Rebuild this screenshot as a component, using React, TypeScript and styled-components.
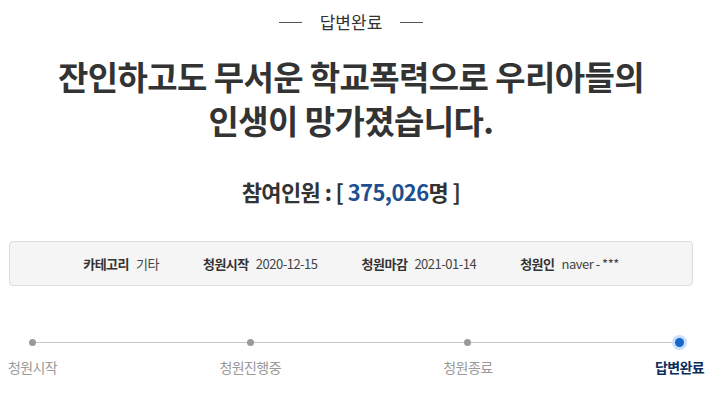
import React from "react";
import styled, { createGlobalStyle } from "styled-components";

const GlobalStyle = createGlobalStyle`
    body {
        margin: 0;
        background: #fff;
        font-family: "Noto Sans CJK KR", "Noto Sans", sans-serif;
        color: #333;
    }
`;

const Page = styled.div`
    width: 712px;
    padding: 11px 18px 0 8px;
    box-sizing: border-box;
`;

const Status = styled.div`
    display: flex;
    justify-content: center;
    align-items: center;
    gap: 18px;
    font-size: 17px;
    line-height: 22px;
    color: #333;

    &::before,
    &::after {
        content: "";
        width: 23px;
        height: 1px;
        background: #555;
    }
`;

const Title = styled.h1`
    margin: 21px 0 0;
    text-align: center;
    font-size: 33px;
    line-height: 44px;
    font-weight: 700;
    letter-spacing: -0.6px;
    color: #333;
`;

const Count = styled.div`
    margin-top: 34px;
    text-align: center;
    font-size: 22px;
    line-height: 30px;
    font-weight: 700;
    letter-spacing: -0.6px;
    color: #333;
`;

const CountNumber = styled.span`
    color: #1d4f91;
`;

const InfoBox = styled.div`
    margin: 35px 1px 0;
    height: 45px;
    box-sizing: border-box;
    border: 1px solid #dcdcdc;
    border-radius: 4px;
    background: #f5f5f5;
    display: flex;
    justify-content: center;
    align-items: center;
    gap: 44px;
    font-size: 13px;
`;

const InfoItem = styled.div`
    display: flex;
    align-items: baseline;
    gap: 7px;
`;

const InfoLabel = styled.span`
    font-weight: 700;
    color: #333;
    letter-spacing: -0.5px;
`;

const InfoValue = styled.span`
    color: #444;
    letter-spacing: -0.5px;
`;

const Steps = styled.div`
    position: relative;
    margin: 53px -10px 0 0;
    display: flex;
    justify-content: space-between;

    &::before {
        content: "";
        position: absolute;
        top: 3px;
        left: 23px;
        right: 32px;
        height: 1px;
        background: #c6c6c6;
    }
`;

const Step = styled.div`
    position: relative;
    display: flex;
    flex-direction: column;
    align-items: center;
    gap: 12px;
`;

const Dot = styled.span<{ $active?: boolean }>`
    width: ${p => (p.$active ? 9 : 7)}px;
    height: ${p => (p.$active ? 9 : 7)}px;
    margin-top: ${p => (p.$active ? -1 : 0)}px;
    margin-bottom: ${p => (p.$active ? -1 : 0)}px;
    border-radius: 50%;
    background: ${p => (p.$active ? "#1a66c9" : "#9a9a9a")};
    box-shadow: ${p => (p.$active ? "0 0 0 3px rgba(80, 150, 235, 0.3)" : "none")};
`;

const StepLabel = styled.span<{ $active?: boolean }>`
    font-size: 14px;
    line-height: 18px;
    letter-spacing: -0.6px;
    color: ${p => (p.$active ? "#0b2d5a" : "#999")};
    font-weight: ${p => (p.$active ? 700 : 400)};
`;

const info = [
    { label: "카테고리", value: "기타" },
    { label: "청원시작", value: "2020-12-15" },
    { label: "청원마감", value: "2021-01-14" },
    { label: "청원인", value: "naver - ***" },
];

const steps = ["청원시작", "청원진행중", "청원종료", "답변완료"];

export default function App() {
    return (
        <>
            <GlobalStyle />
            <Page>
                <Status>답변완료</Status>
                <Title>
                    잔인하고도 무서운 학교폭력으로 우리아들의
                    <br />
                    인생이 망가졌습니다.
                </Title>
                <Count>
                    참여인원 : [ <CountNumber>375,026</CountNumber>명 ]
                </Count>
                <InfoBox>
                    {info.map(item => (
                        <InfoItem key={item.label}>
                            <InfoLabel>{item.label}</InfoLabel>
                            <InfoValue>{item.value}</InfoValue>
                        </InfoItem>
                    ))}
                </InfoBox>
                <Steps>
                    {steps.map((s, i) => {
                        const active = i === steps.length - 1;
                        return (
                            <Step key={s}>
                                <Dot $active={active} />
                                <StepLabel $active={active}>{s}</StepLabel>
                            </Step>
                        );
                    })}
                </Steps>
            </Page>
        </>
    );
}
